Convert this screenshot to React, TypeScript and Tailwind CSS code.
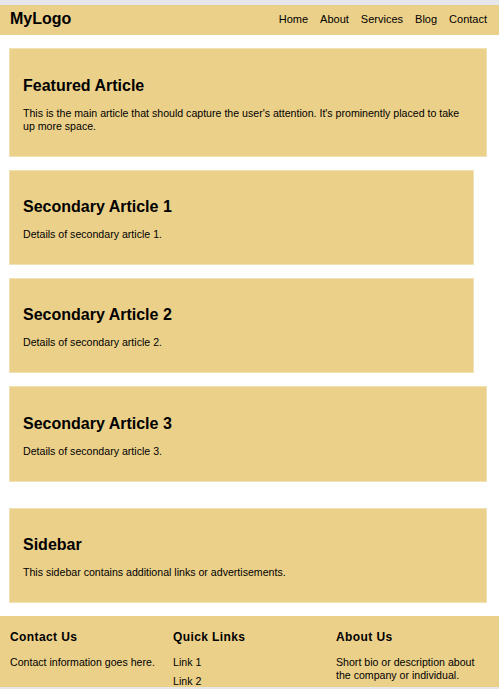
const navLinks = ["Home", "About", "Services", "Blog", "Contact"];

const secondary = [
  { id: 1, width: "w-[465px]", pt: "pt-[25px]" },
  { id: 2, width: "w-[465px]", pt: "pt-[25px]" },
  { id: 3, width: "w-[478px]", pt: "pt-[26px]" },
];

function Card({
  title,
  children,
  className,
}: {
  title: string;
  children: React.ReactNode;
  className: string;
}) {
  return (
    <article className={`border border-[#f1e2b6] bg-[#ebd08a] px-[13px] pb-[23px] ${className}`}>
      <h2 className="mb-[11px] text-[16px] font-bold leading-[21px]">{title}</h2>
      <p className="text-[10.6px] leading-[13px]">{children}</p>
    </article>
  );
}

export default function App() {
  return (
    <div
      className="flex h-[689px] flex-col overflow-hidden border-t-[5px] border-b-2 border-[#e5e7eb] bg-white text-black"
      style={{ fontFamily: '"Liberation Sans", Arial, sans-serif' }}
    >
      <header className="flex h-[30px] shrink-0 items-center justify-between bg-[#ebd08a] px-[10px] pb-[2px]">
        <span className="text-[16px] font-bold">MyLogo</span>
        <nav className="flex gap-[12px] pr-[2px] text-[11px]">
          {navLinks.map((l) => (
            <a key={l} href="#">
              {l}
            </a>
          ))}
        </nav>
      </header>

      <main className="flex flex-col px-[9px] pt-[13px]">
        <Card title="Featured Article" className="w-[478px] pt-[26px]">
          This is the main article that should capture the user's attention. It's prominently placed to take up more
          space.
        </Card>

        <div className="mt-[13px] flex flex-col gap-[13px]">
          {secondary.map((s) => (
            <Card key={s.id} title={`Secondary Article ${s.id}`} className={`${s.width} ${s.pt}`}>
              Details of secondary article {s.id}.
            </Card>
          ))}
        </div>

        <Card title="Sidebar" className="mt-[26px] w-[478px] pt-[25px]">
          This sidebar contains additional links or advertisements.
        </Card>
      </main>

      <footer className="mt-[13px] grid shrink-0 grid-cols-[163px_163px_1fr] bg-[#ebd08a] px-[10px] pt-[14px] pb-[20px]">
        <div>
          <h3 className="mb-[12px] text-[12px] font-bold leading-[14px] tracking-[0.4px]">Contact Us</h3>
          <p className="text-[10.6px] leading-[13px]">Contact information goes here.</p>
        </div>
        <div>
          <h3 className="mb-[12px] text-[12px] font-bold leading-[14px] tracking-[0.4px]">Quick Links</h3>
          <ul className="flex flex-col gap-[6px] text-[10.6px] leading-[13px]">
            <li>Link 1</li>
            <li>Link 2</li>
          </ul>
        </div>
        <div className="pr-[10px]">
          <h3 className="mb-[12px] text-[12px] font-bold leading-[14px] tracking-[0.4px]">About Us</h3>
          <p className="text-[10.6px] leading-[13px]">Short bio or description about the company or individual.</p>
        </div>
      </footer>
    </div>
  );
}
